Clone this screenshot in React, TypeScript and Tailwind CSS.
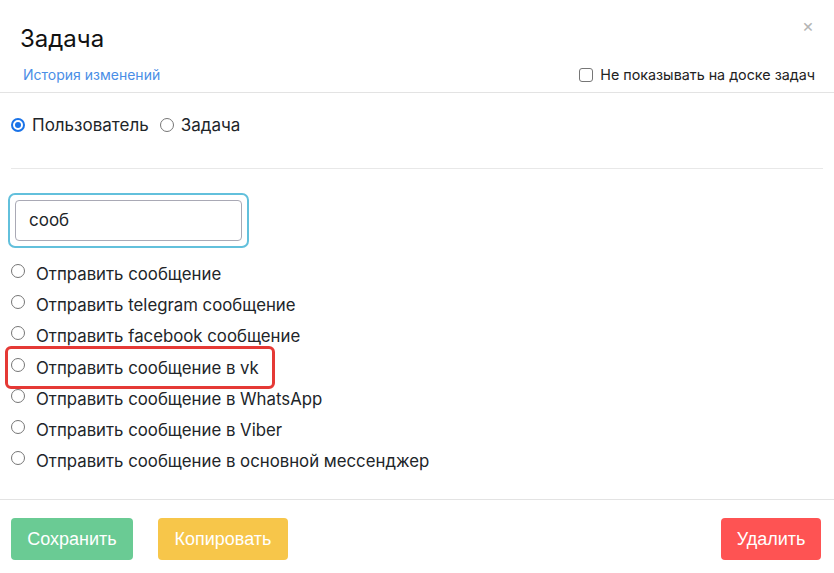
import React from "react";

const options = [
  "Отправить сообщение",
  "Отправить telegram сообщение",
  "Отправить facebook сообщение",
  "Отправить сообщение в vk",
  "Отправить сообщение в WhatsApp",
  "Отправить сообщение в Viber",
  "Отправить сообщение в основной мессенджер",
];

function Radio({ checked }: { checked?: boolean }) {
  if (checked) {
    return (
      <span className="flex h-[14px] w-[14px] shrink-0 items-center justify-center rounded-full border-2 border-[#1a73e8] bg-white">
        <span className="block h-[6px] w-[6px] rounded-full bg-[#1a73e8]" />
      </span>
    );
  }
  return <span className="block h-[14px] w-[14px] shrink-0 rounded-full border border-[#767676] bg-white" />;
}

export default function App() {
  return (
    <div
      className="relative h-[573px] w-[834px] overflow-hidden bg-white text-[#212529]"
      style={{ fontFamily: "Inter, 'Noto Sans', sans-serif" }}
    >
      <span className="absolute right-[20px] top-[17px] text-[18px] leading-none text-[#b5b5b5]">×</span>
      <div className="border-b border-[#e3e3e3] pb-[7px] pl-[20px] pr-[19px] pt-[24px]">
        <div className="text-[24px] leading-[30px] text-[#111]">Задача</div>
        <div className="mt-[11px] flex items-center justify-between">
          <span className="ml-[3px] text-[14px] leading-[20px] text-[#4a8ee6]">История изменений</span>
          <label className="flex items-center gap-[7px] text-[14.3px] leading-[20px] text-[#222]">
            <span className="block h-[14px] w-[14px] rounded-[3px] border border-[#767676] bg-white" />
            Не показывать на доске задач
          </label>
        </div>
      </div>

      <div className="px-[11px]">
        <div className="mt-[21px] flex items-center text-[17px] leading-[22px]">
          <Radio checked />
          <span className="ml-[7px]">Пользователь</span>
          <span className="ml-[11px]"><Radio /></span>
          <span className="ml-[7px]">Задача</span>
        </div>
        <div className="mt-[32px] border-t border-[#e8e8e8]" />

        <div className="ml-[-3px] mt-[24px] w-[241px] rounded-[7px] border-[2px] border-[#62c0dc] p-[5px]">
          <div className="flex h-[41px] items-center rounded-[4px] border border-[#a9a9b5] px-[13px] text-[17px]">
            сооб
          </div>
        </div>

        <div className="mt-[10px] flex flex-col">
          {options.map((o, i) => (
            <div key={i} className="relative flex h-[31.3px] items-center text-[16.8px] leading-[22px]">
              {i === 3 && (
                <span className="absolute left-[-6px] top-[-6px] h-[43px] w-[270px] rounded-[6px] border-[3px] border-[#e53935]" />
              )}
              <span className="mt-[-6px]"><Radio /></span>
              <span className="ml-[11px]">{o}</span>
            </div>
          ))}
        </div>
      </div>

      <div className="absolute left-0 right-0 top-[499px] border-t border-[#e3e3e3]" />
      <div
        className="absolute left-[11px] right-[13px] top-[518px] flex items-center"
        style={{ fontFamily: "'Liberation Sans', Arial, sans-serif" }}
      >
        <button className="h-[42px] w-[122px] rounded-[4px] bg-[#6acb94] text-[18px] text-white">Сохранить</button>
        <button className="ml-[25px] h-[42px] w-[130px] rounded-[4px] bg-[#f7c64a] text-[18px] text-white">Копировать</button>
        <button className="ml-auto h-[42px] w-[100px] rounded-[4px] bg-[#fe5353] text-[18px] text-white">Удалить</button>
      </div>
    </div>
  );
}
